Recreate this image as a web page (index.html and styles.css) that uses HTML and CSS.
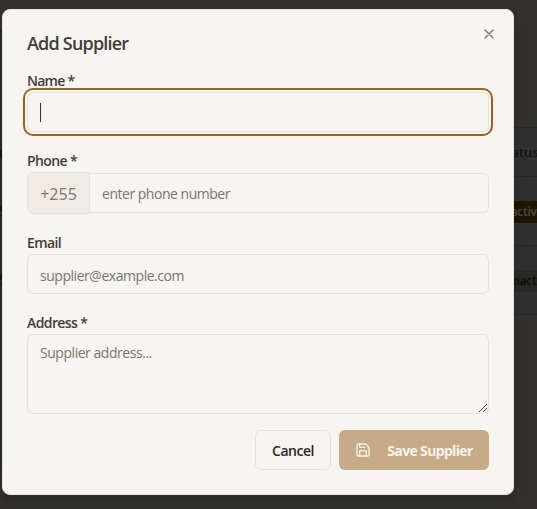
FILE: index.html
```html
<!DOCTYPE html>
<html lang="en">
<head>
<meta charset="utf-8">
<title>Add Supplier</title>
<link rel="stylesheet" href="styles.css">
</head>
<body>
<div class="page">
  <div class="left-edge"><i class="m1"></i><i class="m2"></i><i class="m3"></i><i class="m4"></i><i class="m5"></i><i class="m6"></i></div>
  <div class="table">
    <div class="row head"><span class="th">Status</span></div>
    <div class="row"><span class="badge active">Inactive</span></div>
    <div class="row"><span class="badge inactive">Inactive</span></div>
  </div>
</div>
<form class="dialog">
  <h2 class="title"><span>Add Supplier</span></h2>
  <div class="field">
    <label for="name"><span class="t-name">Name *</span></label>
    <div class="input focused" id="name"><span class="caret"></span></div>
  </div>
  <div class="field">
    <label for="phone"><span class="t-phone">Phone *</span></label>
    <div class="phone">
      <span class="prefix">+255</span>
      <input class="input phone-input" id="phone" placeholder="enter phone number">
    </div>
  </div>
  <div class="field">
    <label for="email"><span class="t-email">Email</span></label>
    <input class="input email" id="email" placeholder="supplier@example.com">
  </div>
  <div class="field">
    <label for="address"><span class="t-address">Address *</span></label>
    <div class="area">
      <textarea class="input" id="address" placeholder="Supplier address..."></textarea>
      <svg class="grip" width="8" height="8" viewBox="0 0 8 8"><path d="M0 8L8 0M4 8L8 4"/></svg>
    </div>
  </div>
  <div class="actions">
    <button type="button" class="btn cancel">Cancel</button>
    <button type="button" class="btn save">
      <svg width="16" height="16" viewBox="0 0 24 24"><path d="M15.2 3a2 2 0 0 1 1.4.6l3.8 3.8a2 2 0 0 1 .6 1.4V19a2 2 0 0 1-2 2H5a2 2 0 0 1-2-2V5a2 2 0 0 1 2-2z"/><path d="M17 21v-7a1 1 0 0 0-1-1H8a1 1 0 0 0-1 1v7M7 3v4a1 1 0 0 0 1 1h7"/></svg>
      <span>Save Supplier</span>
    </button>
  </div>
  <svg class="close" width="16" height="16" viewBox="0 0 24 24"><path d="M18 6L6 18M6 6l12 12"/></svg>
</form>
</body>
</html>
```
FILE: styles.css
```css
* { box-sizing: border-box; }
body {
  margin: 0;
  width: 537px;
  height: 509px;
  overflow: hidden;
  background: #32312f;
  font-family: "Open Sans", "Noto Sans", sans-serif;
  font-size: 14px;
  color: #443b38;
}
.page { position: absolute; inset: 0; overflow: hidden; }
.left-edge { position: absolute; left: 0; top: 30px; width: 3px; height: 440px; background: #2b2b2c; }
.left-edge i { position: absolute; left: 0; width: 2px; height: 5px; background: #121218; }
.left-edge .m1 { top: 0; height: 1px; }
.left-edge .m2 { top: 120px; height: 7px; }
.left-edge .m3 { top: 176px; }
.left-edge .m4 { top: 185px; height: 1px; }
.left-edge .m5 { top: 245px; }
.left-edge .m6 { top: 254px; height: 1px; }
.table { margin: 127px 0 0 480px; width: 90px; border-top: 1px solid #292928; background: #303030; }
.row { height: 69px; display: flex; align-items: center; border-bottom: 1px solid #272726; white-space: nowrap; }
.row.head { height: 49px; }
.th { margin-left: 19px; font-size: 13px; font-weight: 600; color: #151413; }
.badge { height: 22px; width: 80px; font-size: 12px; line-height: 22px; font-weight: 600; border-radius: 11px; letter-spacing: -0.3px; }
.active { padding-left: 20px; background: #201404; color: #4b4943; }
.inactive { padding-left: 29px; background: #292823; color: #0d0c0b; }
.row .badge { position: relative; top: 1px; }
.dialog {
  position: absolute;
  left: 2px;
  top: 9px;
  width: 512px;
  height: 486px;
  padding: 20px 24px 24px;
  background: #f7f5f1;
  border: 1px solid #e5e3da;
  border-radius: 8px;
  box-shadow: 0 8px 12px rgba(0, 0, 0, .14);
}
.title { margin: 0 0 18px; height: 26px; line-height: 26px; font-size: 18px; font-weight: 600; letter-spacing: -0.8px; white-space: nowrap; }
.field { margin-bottom: 22px; }
.field label { display: block; height: 14px; line-height: 14px; margin-bottom: 4px; font-weight: 600; white-space: nowrap; }
.t-name { letter-spacing: -0.75px; }
.t-phone { letter-spacing: -0.6px; }
.t-email { letter-spacing: -0.6px; }
.t-address { letter-spacing: -0.6px; }
.input {
  display: block;
  width: 100%;
  height: 40px;
  padding: 0 12px;
  border: 1px solid #e5e3da;
  border-radius: 6px;
  background: #f7f5f1;
  font: inherit;
  outline: none;
}
.input::placeholder { color: #7d736d; opacity: 1; }
.focused { display: flex; align-items: center; box-shadow: 0 0 0 2px #f7f5f1, 0 0 0 4px #996422; }
.caret { width: 1px; height: 19px; background: #3b302b; }
.phone { display: flex; align-items: center; height: 42px; }
.prefix {
  width: 63px;
  height: 42px;
  border: 1px solid #e5e3da;
  border-radius: 6px 0 0 6px;
  background: #f0ebe4;
  color: #81766f;
  font-size: 16px;
  line-height: 42px;
  text-align: center;
}
.phone-input { flex: 1; width: 0; border-left: 0; border-radius: 0 6px 6px 0; letter-spacing: -0.48px; }
.email { letter-spacing: -0.46px; padding-top: 2px; }
.area { position: relative; }
textarea.input { height: 80px; padding: 8px 12px; line-height: 20px; resize: none; letter-spacing: -0.46px; }
.grip { position: absolute; right: 2px; bottom: 2px; fill: none; stroke: #444; stroke-width: 1; }
.actions { display: flex; justify-content: flex-end; gap: 8px; margin-top: -6px; }
.btn { display: flex; align-items: center; justify-content: center; height: 40px; border-radius: 6px; font: 600 14px "Open Sans", sans-serif; padding: 0; white-space: nowrap; }
.cancel { width: 76px; border: 1px solid #e5e3da; background: #f7f5f1; color: #302521; letter-spacing: -0.5px; }
.save { width: 150px; border: 0; background: #c5ab86; color: #f7f3ec; gap: 16px; font-weight: 700; letter-spacing: -0.65px; }
.save svg, .close { fill: none; stroke: currentColor; stroke-width: 2; stroke-linecap: round; stroke-linejoin: round; }
.close { position: absolute; right: 16px; top: 16px; color: #77736e; }
```
